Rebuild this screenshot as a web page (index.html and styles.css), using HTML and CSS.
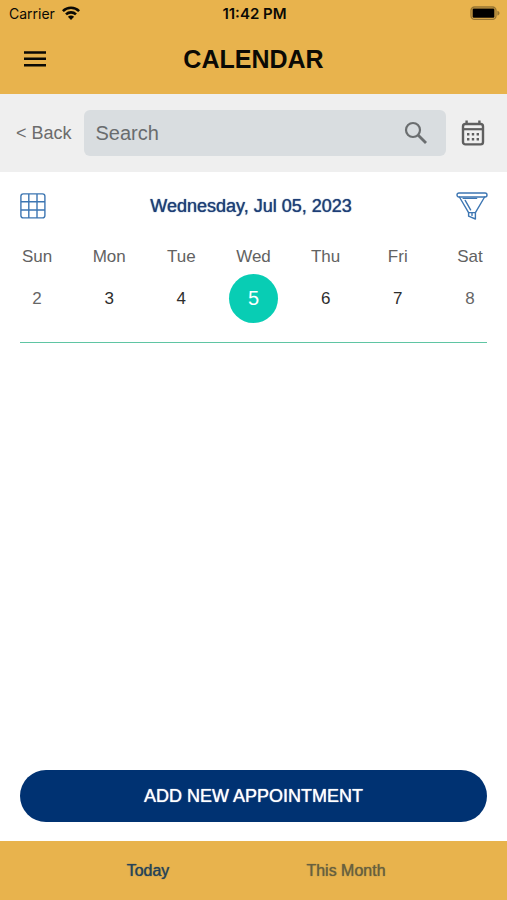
FILE: index.html
```html
<!DOCTYPE html>
<html lang="en">
<head>
<meta charset="utf-8">
<meta name="viewport" content="width=device-width, initial-scale=1">
<title>Calendar</title>
<link rel="stylesheet" href="styles.css">
</head>
<body>
<div class="app">
  <header class="header">
    <div class="status">
      <div class="carrier">
        <span>Carrier</span>
        <svg width="18" height="14" viewBox="0 0 18 14" aria-hidden="true">
          <g fill="none" stroke="#0b0a05" stroke-width="2.6">
            <path d="M0.9 5.1C5.4 0.7 12.6 0.7 17.1 5.1"/>
            <path d="M4 8.4C6.8 5.7 11.2 5.7 14 8.4"/>
          </g>
          <path d="M9 14L5.9 10.8C7.6 9.2 10.4 9.2 12.1 10.8Z" fill="#0b0a05"/>
        </svg>
      </div>
      <time class="clock">11:42 PM</time>
      <svg class="battery" width="30" height="15" viewBox="0 0 30 15" aria-hidden="true">
        <rect x="1" y="1" width="25" height="12.4" rx="3.6" fill="none" stroke="#967532" stroke-width="1.3"/>
        <rect x="2.6" y="2.6" width="21.8" height="9.2" rx="1.2" fill="#000"/>
        <path d="M27.4 4.8C30.2 5.8 30.2 8.6 27.4 9.6Z" fill="#967532"/>
      </svg>
    </div>
    <div class="titlebar">
      <button class="icon-button" type="button" aria-label="Menu">
        <svg width="24" height="18" viewBox="0 0 24 18" aria-hidden="true">
          <path d="M1 2.4H23M1 8.8H23M1 15.2H23" stroke="#0b0a05" stroke-width="2.5"/>
        </svg>
      </button>
      <h1 class="title">CALENDAR</h1>
    </div>
  </header>

  <div class="toolbar">
    <a class="back" href="#">&lt; Back</a>
    <label class="search">
      <input type="search" placeholder="Search" aria-label="Search">
      <svg width="24" height="24" viewBox="0 0 24 24" aria-hidden="true">
        <g fill="none" stroke="#6b6e70" stroke-width="2.2">
          <circle cx="9" cy="9" r="7"/>
          <path d="M14 14L22 22" stroke-width="2.8"/>
        </g>
      </svg>
    </label>
    <button class="icon-button" type="button" aria-label="Pick a date">
      <svg width="24" height="26" viewBox="0 0 24 26" aria-hidden="true">
        <rect x="2" y="4" width="20" height="20.4" rx="2.4" fill="none" stroke="#5f5f5f" stroke-width="2.4"/>
        <path d="M2 9.2H22" stroke="#5f5f5f" stroke-width="2.2"/>
        <path d="M5.6 0.6V5M18.4 0.6V5" stroke="#5f5f5f" stroke-width="2.4"/>
        <path d="M6 14.2H8.4M10.8 14.2H13.2M15.6 14.2H18M6 19.2H8.4M10.8 19.2H13.2M15.6 19.2H18" stroke="#5f5f5f" stroke-width="2.4"/>
      </svg>
    </button>
  </div>

  <main class="main">
    <div class="daybar">
      <button class="icon-button" type="button" aria-label="Month view">
        <svg width="26" height="26" viewBox="0 0 26 26" aria-hidden="true">
          <g fill="none" stroke="#3d76b2" stroke-width="1.4">
            <rect x="0.9" y="0.9" width="24" height="24" rx="2.4"/>
            <path d="M8.8 1V25M17 1V25M1 8.8H25M1 17H25"/>
          </g>
        </svg>
      </button>
      <h2 class="date">Wednesday, Jul 05, 2023</h2>
      <button class="icon-button" type="button" aria-label="Filter">
        <svg width="32" height="28" viewBox="0 0 32 28" aria-hidden="true">
          <g fill="none" stroke="#3d76b2" stroke-width="1.4" stroke-linejoin="round" stroke-linecap="round">
            <rect x="1" y="1" width="30" height="4" rx="2"/>
            <path d="M3.4 5L12.6 20.6H19.4L28.6 5"/>
            <path d="M12.6 20.6V24.2L19.4 27V20.6"/>
            <path d="M7.2 6.4H20.6M9.2 8.4L14.6 17.8"/>
            <path d="M16 21V23.4"/>
          </g>
        </svg>
      </button>
    </div>

    <table class="week">
      <thead>
        <tr><th>Sun</th><th>Mon</th><th>Tue</th><th>Wed</th><th>Thu</th><th>Fri</th><th>Sat</th></tr>
      </thead>
      <tbody>
        <tr>
          <td><button class="day weekend" type="button">2</button></td>
          <td><button class="day" type="button">3</button></td>
          <td><button class="day" type="button">4</button></td>
          <td><button class="day selected" type="button" aria-current="date">5</button></td>
          <td><button class="day" type="button">6</button></td>
          <td><button class="day" type="button">7</button></td>
          <td><button class="day weekend" type="button">8</button></td>
        </tr>
      </tbody>
    </table>
    <hr class="rule">

    <button class="add" type="button">ADD NEW APPOINTMENT</button>
  </main>

  <nav class="tabs">
    <a class="tab active" href="#">Today</a>
    <a class="tab" href="#">This Month</a>
  </nav>
</div>
</body>
</html>
```
FILE: styles.css
```css
* {
  box-sizing: border-box;
}

body {
  margin: 0;
  background: #fff;
  color: #2d2d2d;
  font-family: "Liberation Sans", Arial, sans-serif;
}

button,
input {
  margin: 0;
  padding: 0;
  border: 0;
  background: none;
  color: inherit;
  font: inherit;
}

a {
  text-decoration: none;
}

svg {
  display: block;
}

.app {
  display: flex;
  flex-direction: column;
  min-height: 100vh;
}

.header {
  padding-bottom: 2px;
  background: #e8b34d;
  color: #0b0a05;
}

.status {
  display: grid;
  grid-template-columns: 1fr auto 1fr;
  align-items: center;
  height: 26px;
  padding: 0 7px 0 9px;
  font-family: Inter, sans-serif;
  font-size: 14px;
}

.carrier {
  display: flex;
  align-items: center;
  gap: 7px;
}

.clock {
  font-size: 15px;
  font-weight: 600;
}

.battery {
  justify-self: end;
}

.titlebar {
  display: grid;
  grid-template-columns: 24px 1fr 24px;
  align-items: center;
  height: 66px;
  padding: 0 23px;
}

.title {
  margin: 0;
  font-size: 25px;
  line-height: 28px;
  text-align: center;
}

.toolbar {
  display: flex;
  align-items: center;
  gap: 12px;
  height: 78px;
  padding: 0 22px 0 16px;
  background: #efefef;
}

.toolbar .icon-button {
  margin-left: 3px;
}

.back {
  color: #6c6c6c;
  font-size: 18px;
}

.search {
  display: flex;
  flex: 1;
  align-items: center;
  min-width: 0;
  height: 46px;
  padding: 0 18px 0 12px;
  border-radius: 6px;
  background: #d9dde0;
}

.search input {
  flex: 1;
  min-width: 0;
  height: 100%;
  outline: 0;
  font-size: 20px;
}

.search input::placeholder {
  color: #696c6e;
  opacity: 1;
}

.main {
  display: flex;
  flex: 1;
  flex-direction: column;
}

.daybar {
  display: flex;
  align-items: center;
  justify-content: space-between;
  height: 68px;
  padding: 0 19px 0 20px;
}

.date {
  margin: 0;
  color: #1d3f77;
  font-size: 18px;
  font-weight: 400;
  text-shadow: 0 0 1px #1d3f77;
}

.week {
  width: 100%;
  padding: 0 1px;
  border-spacing: 0;
  table-layout: fixed;
  font-size: 17px;
  text-align: center;
}

.week th {
  height: 34px;
  padding: 0;
  color: #626262;
  font-weight: 400;
}

.week td {
  padding: 0;
}

.day {
  display: block;
  width: 49px;
  height: 49px;
  margin: 0 auto;
  border-radius: 50%;
}

.weekend {
  color: #666;
}

.selected {
  background: #08cdb4;
  color: #fff;
  font-size: 20px;
}

.rule {
  width: auto;
  height: 1px;
  margin: 19px 20px 0;
  border: 0;
  background: #5fc5a3;
}

.add {
  height: 52px;
  margin: auto 20px 19px;
  border-radius: 26px;
  background: #003272;
  color: #fff;
  font-size: 18px;
  text-shadow: 0 0 1px #fff;
}

.tabs {
  display: flex;
  justify-content: center;
  height: 59px;
  padding: 0 62px 0 49px;
  background: #e8b34d;
}

.tab {
  display: flex;
  flex: 1;
  align-items: center;
  justify-content: center;
  color: #67603f;
  font-size: 16px;
  text-shadow: 0 0 1px #67603f;
}

.tab.active {
  color: #274358;
  text-shadow: 0 0 1px #274358;
}
```
